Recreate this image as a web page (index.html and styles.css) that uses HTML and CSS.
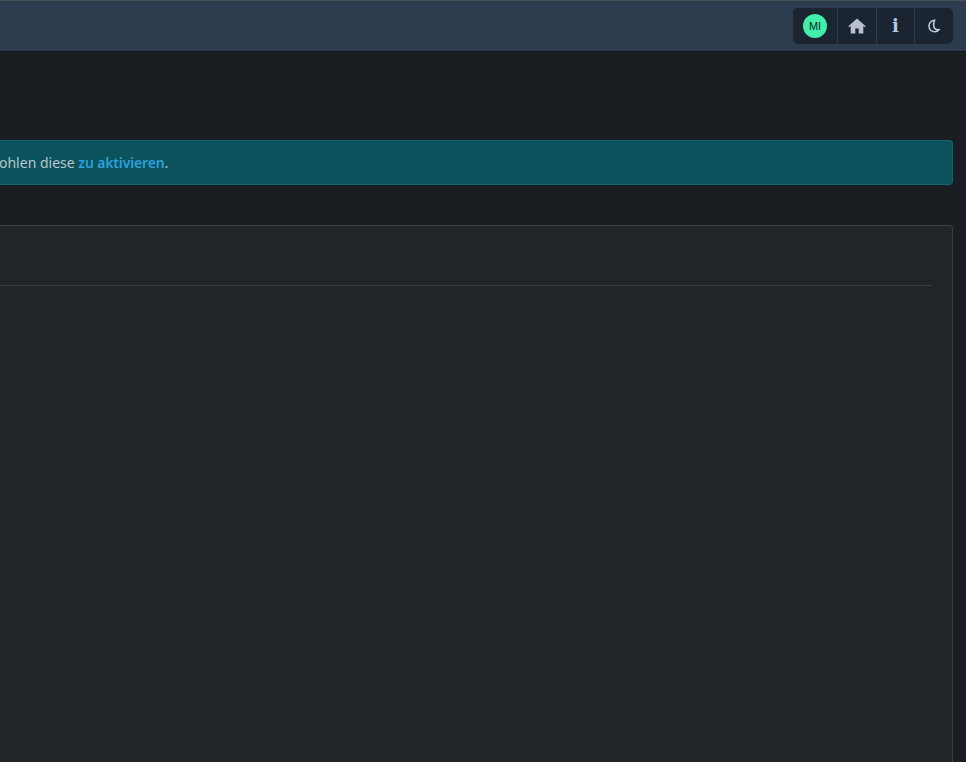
FILE: index.html
```html
<!DOCTYPE html>
<html lang="de">
<head>
<meta charset="utf-8">
<title>Dashboard</title>
<link rel="stylesheet" href="styles.css">
</head>
<body>
<header class="topbar">
  <nav class="toolbar">
    <div class="tool tool-avatar"><span class="avatar">MI</span></div>
    <div class="tool tool-home">
      <svg class="icon" width="18" height="16" viewBox="0 0 18 16"><path fill="#b9c0ce" d="M9 .4 0.3 8.2 1.3 9.3 2.7 8.1V15.5H7.3V10.6h3.4v4.9h4.6V8.1l1.4 1.2 1-1.1z"/></svg>
    </div>
    <div class="tool tool-info"><span class="info-glyph">i</span></div>
    <div class="tool tool-moon">
      <svg class="icon" width="12" height="14" viewBox="0 0 14 16"><path fill="#1b2431" stroke="#c3cbd8" stroke-width="1.8" d="M7.6 1.2C3.6 1.8 1.2 4.6 1.2 8.2c0 3.8 3 6.6 6.6 6.6 2.2 0 4-1 5-2.4-3.6.6-6.2-1.6-6.2-5.2 0-2.4.4-4.4 1-6z"/></svg>
    </div>
  </nav>
</header>
<main class="content">
  <div class="alert">ohlen diese <a class="alert-link" href="#">zu aktivieren</a>.</div>
  <section class="card">
    <div class="card-head"></div>
  </section>
</main>
</body>
</html>
```
FILE: styles.css
```css
html, body {
  margin: 0;
  height: 100%;
  overflow: hidden;
  background: #1a1d21;
}
body {
  font-family: "Noto Sans", "Open Sans", sans-serif;
  font-size: 14px;
  color: #c5cbd3;
}
.topbar {
  box-sizing: border-box;
  height: 52px;
  border-top: 1px solid #4a4f57;
  border-bottom: 1px solid #14171b;
  background: #2c3b4e;
  display: flex;
  justify-content: flex-end;
  align-items: center;
  padding-right: 13px;
}
.toolbar {
  display: flex;
  height: 36px;
  background: #1b2431;
  border-radius: 5px;
}
.tool {
  box-sizing: border-box;
  display: flex;
  align-items: center;
  justify-content: center;
  width: 38px;
  border-left: 1px solid #2c3b4e;
}
.tool-avatar {
  width: 44px;
  border-left: 0;
}
.tool-home { width: 39px; }
.tool-moon { width: 39px; }
.avatar {
  width: 24px;
  height: 24px;
  border-radius: 50%;
  background: #41eeaa;
  color: #08291e;
  font: 11px/24px "Liberation Sans", sans-serif;
  text-align: center;
}
.info-glyph {
  font: bold 18px/1 "DejaVu Serif", serif;
  color: #b4c8e0;
}
.content {
  display: flex;
  flex-direction: column;
  gap: 40px;
  padding: 88px 13px 0 0;
}
.alert {
  box-sizing: border-box;
  height: 45px;
  line-height: 43px;
  white-space: nowrap;
  text-indent: -1px;
  background: #0c525c;
  border: 1px solid #0f6673;
  border-left: 0;
  border-radius: 0 4px 4px 0;
  color: #b9c6cc;
}
.alert-link {
  color: #2ba0dc;
  font-weight: 600;
  letter-spacing: -0.15px;
  text-decoration: none;
}
.card {
  box-sizing: border-box;
  height: 540px;
  padding: 0 20px 0 0;
  background: #212529;
  border: 1px solid #3a3e42;
  border-left: 0;
  border-radius: 0 4px 4px 0;
}
.card-head {
  height: 59px;
  border-bottom: 1px solid #3a3e42;
}
```
